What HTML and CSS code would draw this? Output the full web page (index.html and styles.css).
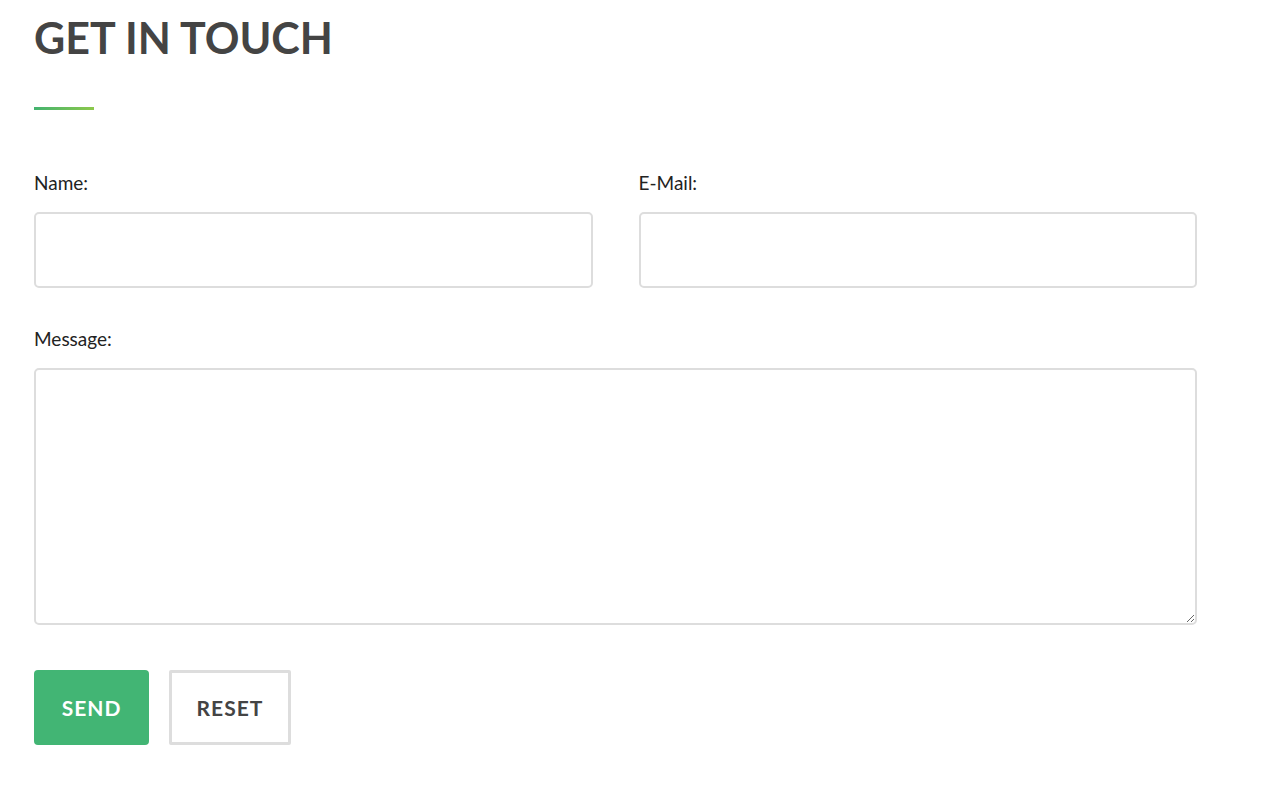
FILE: index.html
```
<!DOCTYPE html>
<html lang="en">
<head>
    <meta charset="UTF-8">
    <meta name="viewport" content="width=device-width, initial-scale=1.0">
    <title>Get in touch</title>
    <link rel="stylesheet" href="styles.css">
</head>
<body>
    <section class="contact">
        <h1>GET IN TOUCH</h1>
        <div class="divider"></div>

        <form class="contact-form">
            <div class="row">
                <div class="field">
                    <label for="name">Name:</label>
                    <input type="text" id="name">
                </div>
                <div class="field">
                    <label for="email">E-Mail:</label>
                    <input type="email" id="email">
                </div>
            </div>

            <div class="field">
                <label for="message">Message:</label>
                <textarea id="message"></textarea>
            </div>

            <div class="actions">
                <button type="submit" class="btn btn-send">SEND</button>
                <button type="reset" class="btn btn-reset">RESET</button>
            </div>
        </form>
    </section>
</body>
</html>
```

FILE: styles.css
```
body {
    margin: 0;
    font-family: Lato, "Open Sans", Arial, sans-serif;
    background: #fff;
    color: #222;
}
.contact {
    width: 1163px;
    padding: 12px 0 0 34px;
}
h1 {
    margin: 0;
    font-size: 43px;
    font-weight: 700;
    line-height: 52px;
    color: #444;
}
.divider {
    width: 60px;
    height: 3px;
    margin-top: 43px;
    background: linear-gradient(to right, #43b36f, #8cc84b);
}
.contact-form {
    margin-top: 62px;
}
.row {
    display: grid;
    grid-template-columns: 1fr 1fr;
    gap: 46px;
}
.field {
    display: flex;
    flex-direction: column;
    margin-bottom: 40px;
}
label {
    font-size: 19px;
    line-height: 22px;
    margin-bottom: 18px;
}
input,
textarea {
    box-sizing: border-box;
    width: 100%;
    border: 2px solid #ddd;
    border-radius: 5px;
    font-family: inherit;
    font-size: 16px;
    padding: 10px 14px;
    background: #fff;
}
input {
    height: 76px;
}
textarea {
    height: 257px;
    resize: vertical;
}
.actions {
    display: flex;
    gap: 20px;
    margin-top: 45px;
}
.btn {
    height: 75px;
    font-family: inherit;
    font-size: 21px;
    font-weight: 700;
    letter-spacing: 1px;
    cursor: pointer;
}
.btn-send {
    width: 115px;
    background: #42b574;
    color: #fff;
    border: none;
    border-radius: 4px;
}
.btn-reset {
    width: 122px;
    background: #fff;
    color: #444;
    border: 3px solid #ddd;
    border-radius: 2px;
}
```
